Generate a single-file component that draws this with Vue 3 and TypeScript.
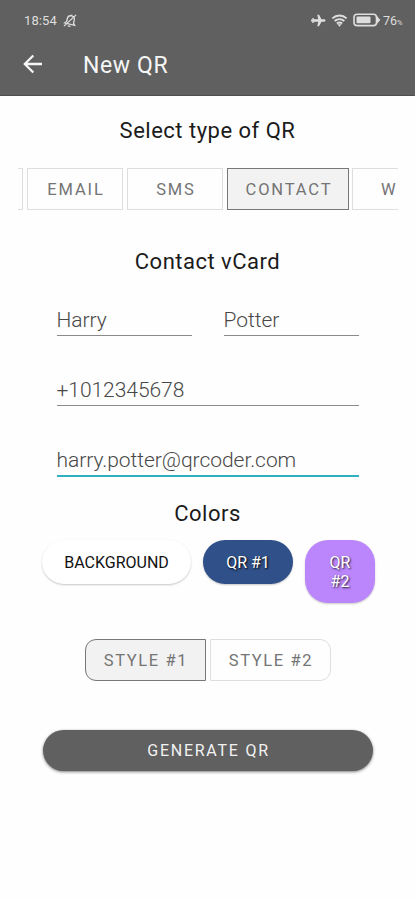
<script setup lang="ts">
import { ref } from 'vue'

interface TypeTab { id: string; label: string }

const types: TypeTab[] = [
  { id: 'text', label: '' },
  { id: 'email', label: 'EMAIL' },
  { id: 'sms', label: 'SMS' },
  { id: 'contact', label: 'CONTACT' },
  { id: 'web', label: 'W' },
]
const styles: string[] = ['STYLE #1', 'STYLE #2']

const activeType = ref('contact')
const activeStyle = ref('STYLE #1')
const firstName = ref('Harry')
const lastName = ref('Potter')
const phone = ref('+1012345678')
const email = ref('harry.potter@qrcoder.com')
</script>

<template>
  <div class="screen">
    <header class="header">
      <div class="status">
        <span class="clock">18:54</span>
        <svg class="bell" viewBox="0 0 16 16" fill="none" stroke="currentColor" stroke-width="1.4">
          <g transform="rotate(14 8 8)">
            <path d="M2.500 12h11l-1.700-2V7c0-2.500-1.500-4-3.800-4S4.200 4.500 4.200 7v3l-1.700 2zM6.500 14.200h3M8 1.500V3" />
          </g>
          <path d="M1 14L14 2" />
        </svg>
        <span class="spacer"></span>
        <svg class="plane" viewBox="0 0 16 14" fill="currentColor">
          <path d="M15.500 7c0-.8-.6-1.300-1.300-1.300h-3L8.600.8H6.700l1 4.900H3.600L2.300 4.300H1L1.700 6H0v2h1.700L1 9.700h1.300l1.300-1.400h4.100l-1 4.900h1.900l2.600-4.900h3c.7 0 1.300-.5 1.300-1.300z" />
        </svg>
        <svg class="signal" viewBox="0 0 18 14" fill="none" stroke="currentColor" stroke-width="2.100">
          <path d="M1.300 4.700C5.800.6 12.200.6 16.700 4.700M3.800 7.600c3-2.700 7.400-2.700 10.400 0M6.200 10.300c1.600-1.400 4-1.400 5.600 0" />
          <path d="M6.700 11h4.600L9 13.600z" fill="currentColor" stroke="none" />
        </svg>
        <svg class="battery" viewBox="0 0 28 14">
          <rect x="1" y="1.200" width="22.500" height="11.400" rx="3.200" fill="none" stroke="currentColor" stroke-width="1.600" />
          <rect x="3.500" y="3.600" width="14" height="6.600" rx="1" fill="currentColor" />
          <path d="M24 3l3.300 3.900L24 10.800z" fill="currentColor" />
        </svg>
        <span class="charge">76<small>%</small></span>
      </div>
      <div class="bar">
        <svg class="back" viewBox="0 0 20 20" fill="none" stroke="currentColor" stroke-width="2.300">
          <path d="M19 10H2M10.300 1.500L1.800 10l8.500 8.500" />
        </svg>
        <h1>New QR</h1>
      </div>
    </header>

    <main>
      <h2 class="title-type">Select type of QR</h2>
      <nav class="types">
        <button
          v-for="t in types"
          :key="t.id"
          :class="['seg', t.id, { active: activeType === t.id }]"
          @click="activeType = t.id"
        >{{ t.label }}</button>
      </nav>

      <h2 class="title-card">Contact vCard</h2>
      <form class="form" @submit.prevent>
        <div class="names">
          <input v-model="firstName" class="first" />
          <input v-model="lastName" class="last" />
        </div>
        <input v-model="phone" class="phone" />
        <input v-model="email" class="email-field" />
      </form>

      <h2 class="title-colors">Colors</h2>
      <div class="colors">
        <button class="chip background">BACKGROUND</button>
        <button class="chip one">QR #1</button>
        <button class="chip two">QR<br />#2</button>
      </div>

      <div class="styles">
        <button
          v-for="s in styles"
          :key="s"
          :class="['seg', { active: activeStyle === s }]"
          @click="activeStyle = s"
        >{{ s }}</button>
      </div>

      <button class="generate">GENERATE QR</button>
    </main>
  </div>
</template>

<style>
body {
  background: #fefefe;
}
</style>

<style scoped>
.screen {
  width: 415px;
  height: 900px;
  overflow: hidden;
  background: #fefefe;
  font-family: Roboto, "Liberation Sans", sans-serif;
  color: #1b1b1b;
}
button, input {
  box-sizing: border-box;
  font-family: inherit;
  margin: 0;
  padding: 0;
  outline: none;
  border-radius: 0;
}
h1, h2 {
  margin: 0;
  font-weight: 400;
}
.header {
  box-sizing: border-box;
  height: 96px;
  background: #606060;
  border-bottom: 1px solid #4e4e4e;
  color: #f6f6f6;
}
.status {
  display: flex;
  align-items: center;
  height: 40px;
  padding: 0 10px 0 24px;
  color: #dedede;
}
.clock {
  width: 39px;
  font-size: 13px;
  letter-spacing: 0.1px;
}
.bell { width: 15px; height: 15px; }
.spacer { flex: 1; }
.plane { width: 15px; height: 13px; }
.signal { width: 17px; height: 13px; margin-left: 5px; }
.battery { width: 28px; height: 14px; margin-left: 5px; }
.charge {
  width: 22px;
  margin-left: 2px;
  font-size: 12.500px;
  white-space: nowrap;
}
.charge small { font-size: 7.500px; }
.bar {
  display: flex;
  align-items: center;
  height: 48px;
  padding-left: 23px;
}
.back { width: 20px; height: 20px; }
h1 {
  margin-left: 40px;
  font-size: 23px;
  line-height: 48px;
  letter-spacing: 0.600px;
  padding-top: 3px;
}
main {
  display: flex;
  flex-direction: column;
  align-items: center;
}
h2 {
  font-size: 22px;
  line-height: 28px;
  letter-spacing: 0.5px;
  white-space: nowrap;
}
.title-type { margin-top: 21px; }
.types {
  display: flex;
  align-self: stretch;
  gap: 4px;
  height: 42px;
  margin: 23px 17px 0 18px;
  overflow: hidden;
}
.seg {
  flex: none;
  height: 42px;
  border: 1px solid #dedede;
  background: transparent;
  color: #747474;
  font-size: 16.500px;
  letter-spacing: 1.850px;
  text-indent: 2px;
}
.seg.active {
  background: #f2f2f2;
  border-color: #777;
}
.seg.text { width: 5px; border-left: 0; }
.seg.email { width: 96px; }
.seg.sms { width: 96px; }
.seg.contact { width: 122px; }
.seg.web {
  width: 46px;
  margin-left: -1px;
  border-right: 0;
  padding-left: 26px;
  text-align: left;
}
.title-card { margin-top: 38px; }
.form {
  display: flex;
  flex-direction: column;
  width: 302px;
  margin-top: 26px;
}
.names {
  display: flex;
  justify-content: space-between;
}
input {
  width: 100%;
  height: 35px;
  padding-top: 3px;
  border: 0;
  border-bottom: 1px solid #8b8b8b;
  background: transparent;
  color: #484848;
  font-size: 21px;
  font-weight: 300;
  letter-spacing: -0.050px;
}
.names input { width: 135px; height: 34px; }
.phone { margin-top: 35px; }
.email-field {
  height: 36px;
  margin-top: 35px;
  border-bottom: 2px solid #31b0c0;
}
.title-colors { margin-top: 23px; }
.colors {
  display: flex;
  align-items: flex-start;
  gap: 12px;
  margin: 12px 0 0 2px;
}
.chip {
  height: 44px;
  border: 0;
  border-radius: 23px;
  color: #fff;
  font-size: 16px;
  line-height: 19px;
  box-shadow: 0 1px 2px rgba(0, 0, 0, 0.22);
}
.background {
  width: 149px;
  background: #fff;
  color: #111;
}
.one {
  width: 90px;
  background: #2f5088;
  text-shadow: 1px 1px 2px #000;
}
.two {
  width: 70px;
  height: 63px;
  background: #bb86fc;
  text-shadow: 1px 1px 2px rgba(0, 0, 0, 0.8);
}
.styles {
  display: flex;
  gap: 4px;
  margin-top: 36px;
}
.styles .seg { width: 121px; letter-spacing: 1.600px; }
.styles .seg:first-child { border-radius: 11px 0 0 11px; }
.styles .seg:last-child { border-radius: 0 11px 11px 0; }
.generate {
  width: 330px;
  height: 41px;
  margin-top: 49px;
  border: 0;
  border-radius: 21px;
  background: #606060;
  color: #f2f2f2;
  font-size: 16px;
  letter-spacing: 1.750px;
  text-indent: 2px;
  box-shadow: 0 1px 3px rgba(0, 0, 0, 0.5);
}
</style>
